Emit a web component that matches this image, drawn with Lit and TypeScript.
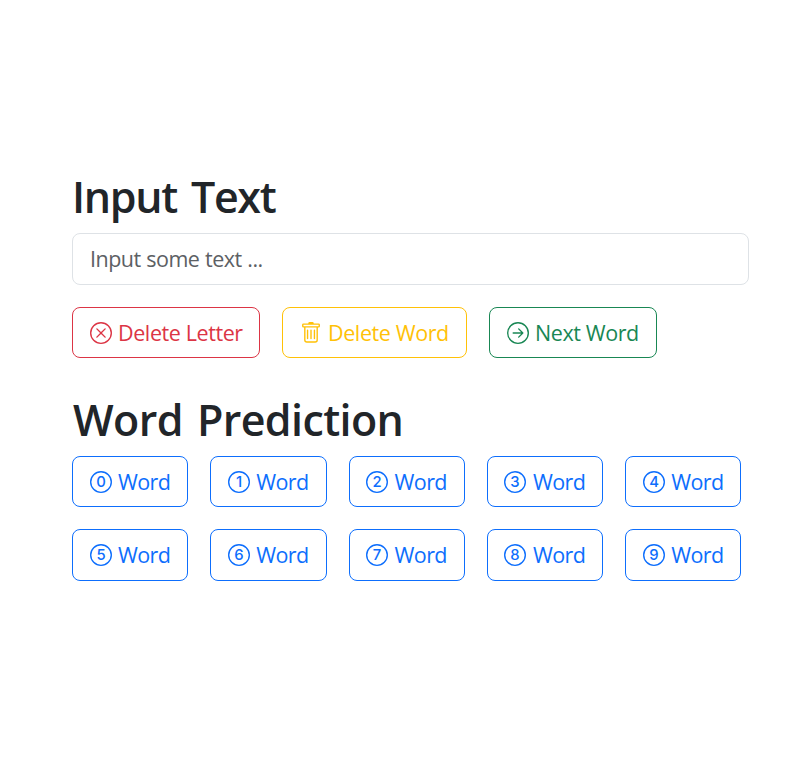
import { LitElement, html, svg, css } from "lit";
import { customElement, state } from "lit/decorators.js";

const ring = svg`<path d="M8 15A7 7 0 1 1 8 1a7 7 0 0 1 0 14m0 1A8 8 0 1 0 8 0a8 8 0 0 0 0 16"/>`;
const icons = {
  cross: svg`${ring}<path d="M4.646 4.646a.5.5 0 0 1 .708 0L8 7.293l2.646-2.647a.5.5 0 0 1 .708.708L8.707 8l2.647 2.646a.5.5 0 0 1-.708.708L8 8.707l-2.646 2.647a.5.5 0 0 1-.708-.708L7.293 8 4.646 5.354a.5.5 0 0 1 0-.708"/>`,
  trash: svg`<path d="M5.5 5.5A.5.5 0 0 1 6 6v6a.5.5 0 0 1-1 0V6a.5.5 0 0 1 .5-.5m2.5 0a.5.5 0 0 1 .5.5v6a.5.5 0 0 1-1 0V6a.5.5 0 0 1 .5-.5m3 .5a.5.5 0 0 0-1 0v6a.5.5 0 0 0 1 0z"/><path d="M14.5 3a1 1 0 0 1-1 1H13v9a2 2 0 0 1-2 2H5a2 2 0 0 1-2-2V4h-.5a1 1 0 0 1-1-1V2a1 1 0 0 1 1-1H6a1 1 0 0 1 1-1h2a1 1 0 0 1 1 1h3.5a1 1 0 0 1 1 1zM4.118 4 4 4.059V13a1 1 0 0 0 1 1h6a1 1 0 0 0 1-1V4.059L11.882 4zM2.5 3h11V2h-11z"/>`,
  arrow: svg`${ring}<path d="M4.5 7.5a.5.5 0 0 0 0 1h5.793l-2.147 2.146a.5.5 0 0 0 .708.708l3-3a.5.5 0 0 0 0-.708l-3-3a.5.5 0 1 0-.708.708L10.293 7.5z"/>`,
};

@customElement("app-root")
export class AppRoot extends LitElement {
  @state() private words: string[] = Array(10).fill("Word");

  static styles = css`
    :host {
      display: block;
      box-sizing: border-box;
      height: 757px;
      padding: 172px 62px 0 72px;
      background: #fff;
      color: #212529;
      font-family: "Open Sans", "Noto Sans", sans-serif;
      font-size: 21.5px;
    }
    h1 {
      margin: 0;
      height: 49px;
      padding-bottom: 12px;
      font-size: 43px;
      font-weight: 600;
      line-height: 49px;
      letter-spacing: -1.3px;
      word-spacing: 4px;
      white-space: nowrap;
    }
    .predict { letter-spacing: -0.6px; word-spacing: 3.5px; margin-top: 37px; padding-left: 1px; }
    input {
      display: block;
      box-sizing: border-box;
      width: 677px;
      height: 52px;
      padding: 0 17px 2px;
      border: 1px solid #dee2e6;
      border-radius: 8px;
      outline: 0;
      background: #fff;
      color: inherit;
      font: inherit;
      letter-spacing: -0.5px;
      word-spacing: 0.5px;
    }
    input::placeholder { color: #5c6064; opacity: 1; }
    .actions { display: flex; gap: 22px; margin-top: 22px; }
    button {
      display: flex;
      align-items: center;
      box-sizing: border-box;
      height: 51px;
      padding: 0 0 0 16.6px;
      gap: 6.4px;
      border: 1px solid currentColor;
      border-radius: 8px;
      background: none;
      font: inherit;
      line-height: 30px;
      letter-spacing: -0.4px;
      white-space: nowrap;
    }
    svg { flex: none; width: 22px; height: 22px; fill: currentColor; }
    .letter { width: 188px; color: #dc3545; }
    .word { width: 185px; color: #ffc107; }
    .next { width: 168px; color: #198754; }
    .words {
      display: grid;
      grid-template-columns: repeat(5, 116.3px);
      grid-template-rows: 51px 52px;
      gap: 22px;
    }
    .words button { color: #0d6efd; height: auto; letter-spacing: -0.6px; }
    .words button:nth-child(n + 6) span { padding-bottom: 1px; }
    .digit { font: 550 10.8px Inter, "Liberation Sans", sans-serif; letter-spacing: 0; text-anchor: middle; }
  `;

  private icon(body: unknown) {
    return html`<svg viewBox="0 0 16 16" aria-hidden="true">${body}</svg>`;
  }

  render() {
    return html`
      <h1>Input Text</h1>
      <input type="text" placeholder="Input some text ..." />
      <div class="actions">
        <button class="letter">${this.icon(icons.cross)}<span>Delete Letter</span></button>
        <button class="word">${this.icon(icons.trash)}<span>Delete Word</span></button>
        <button class="next">${this.icon(icons.arrow)}<span>Next Word</span></button>
      </div>
      <h1 class="predict">Word Prediction</h1>
      <div class="words">
        ${this.words.map((word, i) => html`
          <button>${this.icon(svg`${ring}<text class="digit" x="8" y="11.95">${i}</text>`)}<span>${word}</span></button>
        `)}
      </div>
    `;
  }
}
